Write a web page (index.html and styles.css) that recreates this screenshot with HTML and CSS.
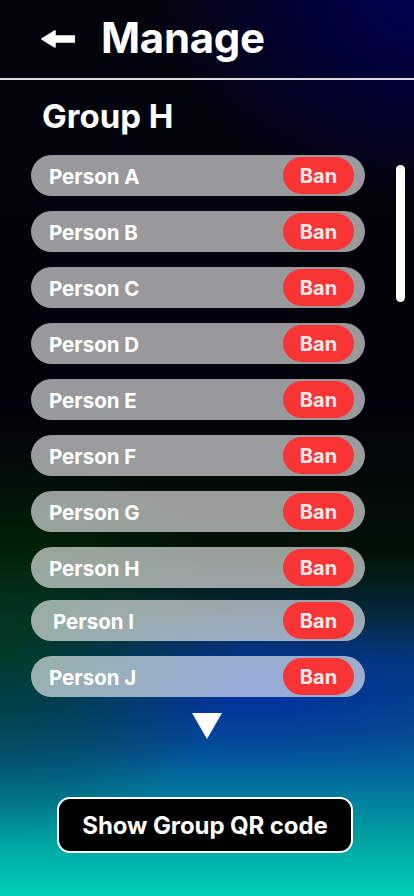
FILE: index.html
```html
<!DOCTYPE html>
<html lang="en">
<head>
<meta charset="utf-8">
<title>Manage</title>
<link rel="stylesheet" href="styles.css">
</head>
<body>
<div class="screen">
  <header class="topbar">
    <svg class="back" width="34" height="18" viewBox="0 0 34 18" aria-hidden="true">
      <path d="M1 9 L14 1 L14 6 L34 6 L34 12 L14 12 L14 17 Z" fill="#fff" stroke="#fff" stroke-width="1.5" stroke-linejoin="round"/>
    </svg>
    <h1 class="title">Manage</h1>
  </header>
  <h2 class="group">Group H</h2>
  <div class="content">
    <ul class="list">
      <li class="row"><span class="name">Person A</span><button class="ban">Ban</button></li>
      <li class="row"><span class="name">Person B</span><button class="ban">Ban</button></li>
      <li class="row"><span class="name">Person C</span><button class="ban">Ban</button></li>
      <li class="row"><span class="name">Person D</span><button class="ban">Ban</button></li>
      <li class="row"><span class="name">Person E</span><button class="ban">Ban</button></li>
      <li class="row"><span class="name">Person F</span><button class="ban">Ban</button></li>
      <li class="row"><span class="name">Person G</span><button class="ban">Ban</button></li>
      <li class="row"><span class="name">Person H</span><button class="ban">Ban</button></li>
      <li class="row row-tight"><span class="name name-i">Person I</span><button class="ban">Ban</button></li>
      <li class="row"><span class="name">Person J</span><button class="ban">Ban</button></li>
    </ul>
    <div class="scrollbar"></div>
  </div>
  <div class="more">
    <svg width="30" height="26" viewBox="0 0 30 26" aria-hidden="true"><path d="M0 0 L30 0 L15 26 Z" fill="#fff"/></svg>
  </div>
  <div class="actions">
    <button class="qr">Show Group QR code</button>
  </div>
</div>
</body>
</html>
```
FILE: styles.css
```css
* { box-sizing: border-box; }
html, body { margin: 0; padding: 0; }
body {
  width: 414px;
  height: 896px;
  overflow: hidden;
  font-family: Inter, "Open Sans", sans-serif;
  color: #fff;
}
.screen {
  width: 414px;
  height: 896px;
  display: flex;
  flex-direction: column;
  background:
    radial-gradient(ellipse 260px 200px at 100% 0%, rgba(0, 0, 90, 0.9), rgba(0, 0, 90, 0) 100%),
    radial-gradient(ellipse 240px 200px at 0% 72%, rgba(0, 60, 10, 0.7), rgba(0, 60, 10, 0) 100%),
    radial-gradient(ellipse 300px 80px at 60% 77%, rgba(0, 45, 170, 0.85), rgba(0, 45, 170, 0) 100%),
    linear-gradient(180deg, #03030d 0%, #02020a 45%, #021206 62%, #063a6a 74%, #045c9c 85%, #00a4a2 94%, #00d0ba 100%);
}
.topbar {
  height: 80px;
  display: flex;
  align-items: center;
  gap: 26px;
  padding: 0 0 2px 41px;
  border-bottom: 2px solid #dcdcdc;
}
.back { display: block; margin-top: 2px; }
.title {
  margin: 0;
  font-size: 42px;
  font-weight: 700;
  line-height: 1;
  letter-spacing: -0.3px;
}
.group {
  margin: 16px 0 19px 42px;
  font-size: 33px;
  font-weight: 700;
  line-height: 40px;
}
.content {
  display: flex;
  align-items: flex-start;
  padding-left: 31px;
}
.list {
  list-style: none;
  margin: 0;
  padding: 0;
  width: 334px;
  display: flex;
  flex-direction: column;
  gap: 15px;
}
.row {
  height: 41px;
  border-radius: 21px;
  background: rgba(255, 255, 255, 0.6);
  display: flex;
  align-items: center;
  justify-content: space-between;
  padding: 0 11px 0 18px;
}
.row-tight { margin-top: -3px; }
.name {
  font-size: 20.5px;
  font-weight: 700;
  letter-spacing: 0;
  margin-top: 1px;
}
.name-i { padding-left: 4px; }
.ban {
  width: 71px;
  height: 37px;
  border: none;
  border-radius: 19px;
  background: #f83434;
  color: #f7eaea;
  font-family: inherit;
  font-size: 20px;
  font-weight: 700;
  padding: 0;
}
.scrollbar {
  width: 9px;
  height: 137px;
  margin: 10px 0 0 31px;
  border-radius: 5px;
  background: #fff;
}
.more {
  display: flex;
  justify-content: center;
  margin-top: 16px;
}
.more svg { display: block; }
.actions {
  display: flex;
  justify-content: center;
  margin-top: 58px;
  padding-right: 4px;
}
.qr {
  width: 296px;
  height: 56px;
  border: 2px solid #fff;
  border-radius: 13px;
  background: #000;
  color: #fff;
  font-family: inherit;
  font-size: 24px;
  font-weight: 700;
  letter-spacing: -0.1px;
  padding: 0;
}
```
